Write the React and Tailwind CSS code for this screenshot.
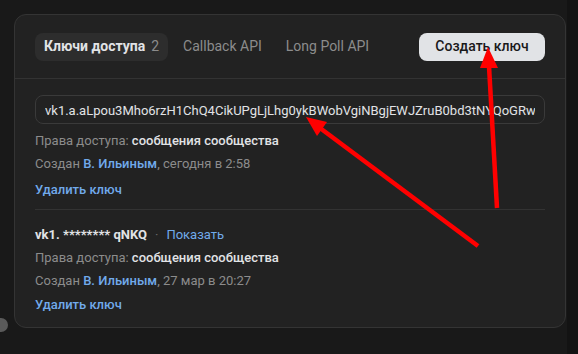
import React from 'react';

const KEY_FULL = 'vk1.a.aLpou3Mho6rzH1ChQ4CikUPgLjLhg0ykBWobVgiNBgjEWJZruB0bd3tNYQoGRw';

function Meta({ author, date }) {
  return (
    <>
      <div className="h-[23px] flex items-center text-[13px]">
        <span className="text-[#8c8c8c]">Права доступа:&nbsp;</span>
        <span className="text-[#e1e3e6] font-medium">сообщения сообщества</span>
      </div>
      <div className="h-[23px] flex items-center text-[13px] text-[#8c8c8c]">
        Создан&nbsp;<span className="text-[#71aaeb] font-medium">{author}</span>, {date}
      </div>
    </>
  );
}

function Arrows() {
  return (
    <svg className="absolute inset-0 pointer-events-none" width="578" height="354">
      <line x1="478" y1="246" x2="320" y2="128" stroke="#ff0000" strokeWidth="4.5" />
      <polygon points="306,117 327,122 317,136" fill="#ff0000" />
      <line x1="497" y1="208" x2="489" y2="66" stroke="#ff0000" strokeWidth="4.5" />
      <polygon points="488,47 498,68 480,68" fill="#ff0000" />
    </svg>
  );
}

export default function App() {
  return (
    <div
      className="relative w-[578px] h-[354px] bg-[#191919] flex overflow-hidden"
      style={{ fontFamily: 'Roboto, "Liberation Sans", sans-serif' }}
    >
      <div className="w-[567px] pl-[14px] pt-[14px]">
        <div className="w-[552px] h-[314px] bg-[#222222] border border-[#343434] rounded-[12px] flex flex-col">
          {/* Tabs */}
          <div className="h-[64px] flex items-center px-[20px] border-b border-[#333333]">
            <div className="flex items-center gap-[6px]">
              <div className="h-[28px] px-[9px] rounded-lg bg-[#2d2d2d] flex items-center text-[14px]">
                <span className="font-bold text-[#e1e3e6]">Ключи доступа</span>
                <span className="ml-[6px] text-[#8c8c8c]">2</span>
              </div>
              <div className="h-[28px] px-[9px] flex items-center text-[14px] text-[#8c8c8c]">Callback API</div>
              <div className="h-[28px] px-[9px] flex items-center text-[14px] text-[#8c8c8c]">Long Poll API</div>
            </div>
            <button className="ml-auto h-[28px] w-[126px] rounded-lg bg-[#e1e3e6] text-[#19191a] text-[14px] font-medium flex items-center justify-center">
              Создать ключ
            </button>
          </div>

          <div className="px-[20px] pt-[16px] flex flex-col">
            {/* New key */}
            <div className="h-[29px] rounded-lg border border-[#3a3a3a] bg-[#222222] px-[9px] flex items-center">
              <div className="flex-1 overflow-hidden">
                <span className="whitespace-nowrap text-[13px] text-[#e1e3e6]">{KEY_FULL}</span>
              </div>
            </div>
            <div className="mt-[5px]">
              <Meta author="В. Ильиным" date="сегодня в 2:58" />
            </div>
            <div className="h-6 mt-[3px] flex items-center text-[13px] text-[#71aaeb] font-medium">Удалить ключ</div>

            <div className="mt-[7px] border-t border-[#333333]" />

            {/* Old key */}
            <div className="mt-[13px] h-[23px] flex items-center text-[13px]">
              <span className="font-bold text-[#e1e3e6]">vk1. ******** qNKQ</span>
              <span className="mx-[8px] text-[#6a6a6a]">·</span>
              <span className="text-[#71aaeb]">Показать</span>
            </div>
            <Meta author="В. Ильиным" date="27 мар в 20:27" />
            <div className="h-6 mt-[1px] flex items-center text-[13px] text-[#71aaeb] font-medium">Удалить ключ</div>
          </div>
        </div>
      </div>
      <div className="flex-1 bg-[#131313]" />

      <div className="absolute left-[-6px] top-[318px] w-[14px] h-[14px] rounded-full bg-[#5a5a5a]" />
      <Arrows />
    </div>
  );
}
